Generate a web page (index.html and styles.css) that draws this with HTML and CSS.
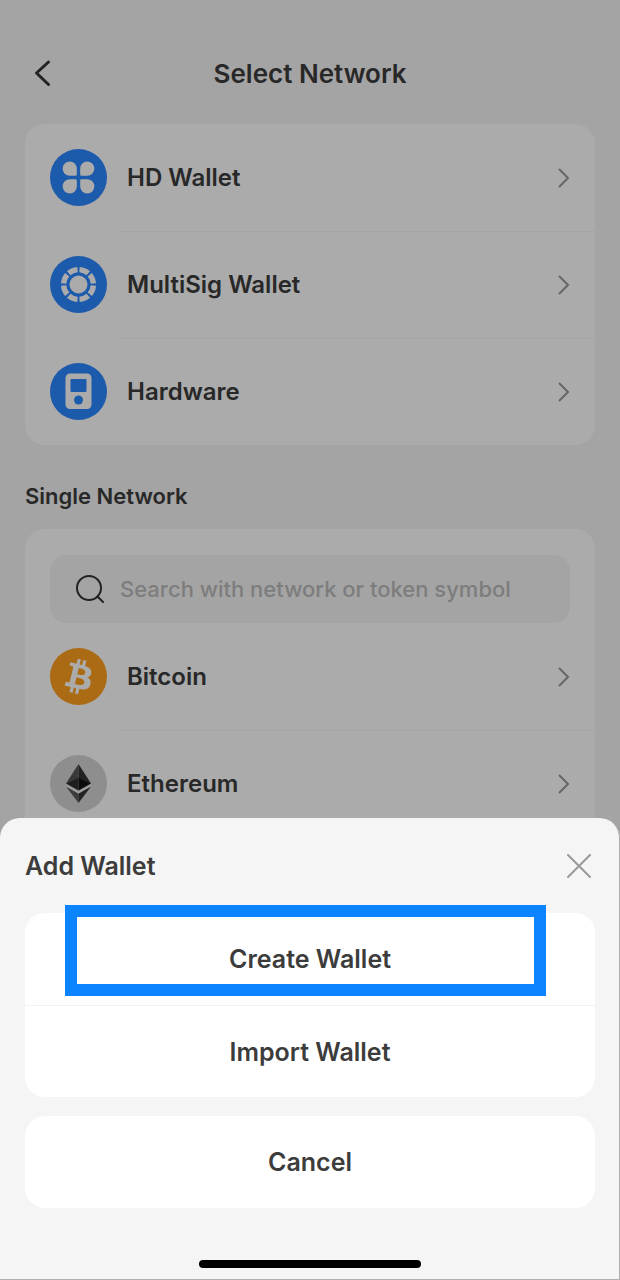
FILE: index.html
```
<!DOCTYPE html>
<html lang="en">
<head>
<meta charset="utf-8">
<meta name="viewport" content="width=device-width,initial-scale=1.0">
<title>Select Network</title>
<link rel="stylesheet" href="styles.css">
</head>

<body>
<div class="page">
	<header class="navbar">
		<button class="back" type="button" aria-label="Back">
			<svg width="18" height="28" viewBox="0 0 18 28"><path d="M15.500 3L3.500 14L15.500 25.500"/></svg>
		</button>
		<h1 class="navbar-title">Select Network</h1>
	</header>

	<ul class="card">
		<li class="row">
			<a class="row-link" href="#hd">
				<svg class="coin" viewBox="0 0 57 57">
					<circle cx="28.500" cy="28.500" r="28.500" fill="#2a86ff"/>
					<g fill="#fff">
						<path d="M19.800 12.500a7 7 0 0 1 7 7v6a1.300 1.300 0 0 1-1.300 1.300h-5.700a7.150 7.150 0 0 1 0-14.300z"/>
						<path d="M37.200 12.500a7 7 0 0 0-7 7v6a1.300 1.300 0 0 0 1.300 1.300h5.700a7.150 7.150 0 0 0 0-14.300z"/>
						<path d="M19.800 44.500a7 7 0 0 0 7-7v-6a1.300 1.300 0 0 0-1.300-1.300h-5.700a7.150 7.150 0 0 0 0 14.300z"/>
						<path d="M37.200 44.500a7 7 0 0 1-7-7v-6a1.300 1.300 0 0 1 1.300-1.300h5.700a7.150 7.150 0 0 1 0 14.300z"/>
					</g>
				</svg>
				<span class="row-name">HD Wallet</span>
				<svg class="arrow" viewBox="0 0 12 20"><path d="M1 1L10 10L1 19"/></svg>
			</a>
		</li>
		<li class="row">
			<a class="row-link" href="#multisig">
				<svg class="coin" viewBox="0 0 57 57">
					<circle cx="28.500" cy="28.500" r="28.500" fill="#2a86ff"/>
					<circle cx="28.500" cy="28.500" r="9" fill="#fff"/>
					<circle cx="28.500" cy="28.500" r="14.900" fill="none" stroke="#fff" stroke-width="5.400" pathLength="80" stroke-dasharray="8.200 1.800" stroke-dashoffset="-0.900"/>
				</svg>
				<span class="row-name">MultiSig Wallet</span>
				<svg class="arrow" viewBox="0 0 12 20"><path d="M1 1L10 10L1 19"/></svg>
			</a>
		</li>
		<li class="row">
			<a class="row-link" href="#hardware">
				<svg class="coin" viewBox="0 0 57 57">
					<circle cx="28.500" cy="28.500" r="28.500" fill="#2a86ff"/>
					<rect x="15.500" y="10.500" width="26" height="35.500" rx="4.500" fill="#fff"/>
					<rect x="20.500" y="16" width="16" height="13" rx="1" fill="#2a86ff"/>
					<circle cx="28.500" cy="37" r="4.500" fill="#2a86ff"/>
				</svg>
				<span class="row-name">Hardware</span>
				<svg class="arrow" viewBox="0 0 12 20"><path d="M1 1L10 10L1 19"/></svg>
			</a>
		</li>
	</ul>

	<h2 class="section-title">Single Network</h2>

	<div class="card card-search">
		<label class="search">
			<svg class="search-icon" viewBox="0 0 28 28"><circle cx="13" cy="13" r="12"/><path d="M21.500 21.500L27 27"/></svg>
			<input class="search-input" type="text" placeholder="Search with network or token symbol" aria-label="Search with network or token symbol">
		</label>
		<ul class="list">
			<li class="row">
				<a class="row-link" href="#btc">
					<svg class="coin" viewBox="0 0 32 32">
						<circle cx="16" cy="16" r="16" fill="#ff9f1e"/>
						<path fill="#fff" d="M23.189 14.020c.314-2.096-1.283-3.223-3.465-3.975l.708-2.840-1.728-.430-.690 2.765c-.454-.114-.920-.220-1.385-.326l.695-2.783L15.596 6l-.708 2.839c-.376-.086-.746-.170-1.104-.260l.002-.009-2.384-.595-.460 1.846s1.283.294 1.256.312c.700.175.826.638.805 1.006l-.806 3.235c.048.012.110.030.180.057l-.183-.045-1.130 4.532c-.086.212-.303.531-.793.410.018.025-1.256-.313-1.256-.313l-.858 1.978 2.250.561c.418.105.828.215 1.231.318l-.715 2.872 1.727.430.708-2.840c.472.127.930.245 1.378.357l-.706 2.828 1.728.430.715-2.866c2.948.558 5.164.333 6.097-2.333.752-2.146-.037-3.385-1.588-4.192 1.130-.260 1.980-1.003 2.207-2.538zm-3.950 5.538c-.533 2.147-4.148.986-5.320.695l.950-3.805c1.172.293 4.929.872 4.370 3.110zm.535-5.569c-.487 1.953-3.495.960-4.470.717l.860-3.450c.975.243 4.118.696 3.610 2.733z"/>
					</svg>
					<span class="row-name">Bitcoin</span>
					<svg class="arrow" viewBox="0 0 12 20"><path d="M1 1L10 10L1 19"/></svg>
				</a>
			</li>
			<li class="row">
				<a class="row-link" href="#eth">
					<svg class="coin" viewBox="0 0 57 57">
						<circle cx="28.500" cy="28.500" r="28.500" fill="#d4d4d4"/>
						<path d="M28.500 9L16 28.500L28.500 24z" fill="#555"/>
						<path d="M28.500 9L41 28.500L28.500 24z" fill="#333"/>
						<path d="M16 28.500L28.500 23V35.500z" fill="#2d2d2d"/>
						<path d="M41 28.500L28.500 23V35.500z" fill="#111"/>
						<path d="M16 31.500L28.500 38.500V48z" fill="#5c5c5c"/>
						<path d="M41 31.500L28.500 38.500V48z" fill="#333"/>
						<path d="M16 29.500L28.500 36.500L41 29.500V31L28.500 38.500L16 31z" fill="#eee"/>
					</svg>
					<span class="row-name">Ethereum</span>
					<svg class="arrow" viewBox="0 0 12 20"><path d="M1 1L10 10L1 19"/></svg>
				</a>
			</li>
		</ul>
	</div>
</div>

<div class="mask">
	<div class="sheet" role="dialog" aria-labelledby="sheet-title">
		<div class="sheet-head">
			<h2 class="sheet-title" id="sheet-title">Add Wallet</h2>
			<button class="close" type="button" aria-label="Close">
				<svg width="24" height="24" viewBox="0 0 24 24"><path d="M1 1L23 23M23 1L1 23"/></svg>
			</button>
		</div>
		<div class="actions">
			<button class="action action-current" type="button">Create Wallet</button>
			<button class="action" type="button">Import Wallet</button>
		</div>
		<div class="actions">
			<button class="action" type="button">Cancel</button>
		</div>
		<div class="home-bar"></div>
	</div>
</div>
</body>

</html>
```

FILE: styles.css
```
*,*:before,*:after{
	padding: 0;
	margin: 0;
	box-sizing: border-box;
}
body{
	font-family: Inter, "Liberation Sans", sans-serif;
	font-weight: 600;
	color: #3c3c3c;
	background-color: #f5f5f5;
}
button,input{
	font: inherit;
	color: inherit;
	border: 0;
	background: none;
}
ul{
	list-style: none;
}
svg{
	display: block;
	flex: none;
}
.page{
	height: 100vh;
	padding: 0 25px;
	overflow: hidden;
}

/* top bar */
.navbar{
	display: grid;
	grid-template-columns: 36px 1fr 36px;
	align-items: center;
	height: 124px;
	padding-top: 22px;
}
.back{
	padding-left: 8px;
}
.back path{
	fill: none;
	stroke: #333;
	stroke-width: 3;
	stroke-linecap: round;
	stroke-linejoin: round;
}
.navbar-title{
	font-size: 26px;
	font-weight: 600;
	text-align: center;
}

/* cards */
.card{
	border-radius: 20px;
	background-color: #fff;
}
.row-link{
	display: flex;
	align-items: center;
	gap: 20px;
	height: 107px;
	padding: 0 25px;
	color: inherit;
	text-decoration: none;
}
.row + .row{
	background: linear-gradient(#f7f7f7, #f7f7f7) 95px 0 / 100% 1px no-repeat;
}
.coin{
	width: 57px;
	height: 57px;
}
.row-name{
	flex: 1;
	font-size: 24px;
}
.arrow{
	width: 12px;
	height: 20px;
}
.arrow path{
	fill: none;
	stroke: #999;
	stroke-width: 2;
}
.section-title{
	padding: 37px 0 19px;
	font-size: 22px;
	font-weight: 600;
	line-height: 28px;
}
.card-search{
	padding-top: 26px;
}
.search{
	display: flex;
	align-items: center;
	gap: 16px;
	height: 68px;
	margin: 0 25px;
	padding: 0 26px;
	border-radius: 16px;
	background-color: #f5f5f5;
}
.search-icon{
	width: 28px;
	height: 28px;
	fill: none;
	stroke: #333;
	stroke-width: 2;
	stroke-linecap: round;
}
.search-input{
	flex: 1;
	min-width: 0;
	font-size: 22px;
	font-weight: 500;
	outline: 0;
}
.search-input::placeholder{
	color: #bbb;
	opacity: 1;
}

/* bottom sheet */
.mask{
	position: fixed;
	inset: 0;
	display: flex;
	flex-direction: column;
	justify-content: flex-end;
	background-color: rgba(0,0,0,.33);
}
.sheet{
	padding: 0 24px 11px 25px;
	border-right: 1px solid #b0b0b0;
	border-bottom: 1px solid #b0b0b0;
	border-radius: 20px 20px 0 0;
	background-color: #f5f5f5;
}
.sheet-head{
	display: flex;
	align-items: center;
	justify-content: space-between;
	height: 95px;
	padding-right: 4px;
}
.sheet-title{
	font-size: 25px;
	font-weight: 600;
}
.close path{
	stroke: #999;
	stroke-width: 2;
	stroke-linecap: round;
}
.actions{
	border-radius: 20px;
	background-color: #fff;
}
.actions + .actions{
	margin-top: 19px;
}
.action{
	position: relative;
	display: block;
	width: 100%;
	height: 92px;
	font-size: 25px;
}
.action + .action{
	border-top: 1px solid #f2f2f2;
}
.action-current:after{
	content: "";
	position: absolute;
	inset: -8px 49px 9px 40px;
	border: 12px solid #0d84ff;
}
.home-bar{
	width: 39%;
	height: 8px;
	margin: 52px auto 0;
	border-radius: 4px;
	background-color: #000;
}
```
